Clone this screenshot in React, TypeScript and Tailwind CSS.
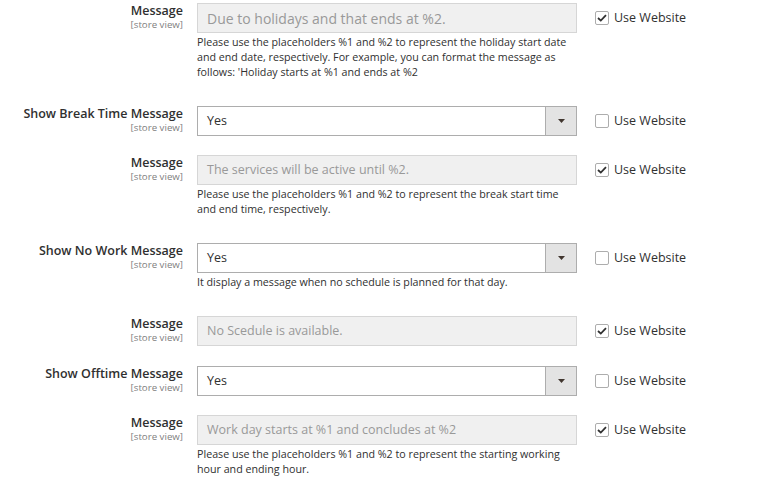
import React from 'react'

type Row = {
  label: string
  kind: 'text' | 'select'
  value: string
  checked: boolean
  big?: boolean
  note?: string[]
}

const rows: Row[] = [
  {
    label: 'Message',
    kind: 'text',
    value: 'Due to holidays and that ends at %2.',
    checked: true,
    big: true,
    note: [
      'Please use the placeholders %1 and %2 to represent the holiday start date',
      'and end date, respectively. For example, you can format the message as',
      "follows: 'Holiday starts at %1 and ends at %2",
    ],
  },
  { label: 'Show Break Time Message', kind: 'select', value: 'Yes', checked: false },
  {
    label: 'Message',
    kind: 'text',
    value: 'The services will be active until %2.',
    checked: true,
    note: [
      'Please use the placeholders %1 and %2 to represent the break start time',
      'and end time, respectively.',
    ],
  },
  {
    label: 'Show No Work Message',
    kind: 'select',
    value: 'Yes',
    checked: false,
    note: ['It display a message when no schedule is planned for that day.'],
  },
  { label: 'Message', kind: 'text', value: 'No Scedule is available.', checked: true },
  { label: 'Show Offtime Message', kind: 'select', value: 'Yes', checked: false },
  {
    label: 'Message',
    kind: 'text',
    value: 'Work day starts at %1 and concludes at %2',
    checked: true,
    note: [
      'Please use the placeholders %1 and %2 to represent the starting working',
      'hour and ending hour.',
    ],
  },
]

const Checkbox = ({ checked }: { checked: boolean }) => (
  <span className="flex h-[14px] w-[14px] items-center justify-center rounded-[2px] border border-[#adadad] bg-white">
    {checked && (
      <svg width="10" height="8" viewBox="0 0 10 8">
        <path d="M1 4 L3.8 6.6 L9 1.2" fill="none" stroke="#303030" strokeWidth="1.8" />
      </svg>
    )}
  </span>
)

const Field = ({ row }: { row: Row }) => {
  if (row.kind === 'select') {
    return (
      <div className="flex h-[30px] w-[380px] border border-[#adadad] bg-white">
        <div className="flex flex-1 items-center pl-[9px] text-[12.5px] text-[#303030]">{row.value}</div>
        <div className="flex w-[31px] items-center justify-center border-l border-[#adadad] bg-[#e3e3e3]">
          <svg width="7" height="4" viewBox="0 0 7 4">
            <path d="M0 0 L7 0 L3.5 4 Z" fill="#41362f" />
          </svg>
        </div>
      </div>
    )
  }
  return (
    <div
      className={`flex h-[30px] w-[380px] items-center border border-[#d6d6d6] bg-[#f0f0f0] pl-[9px] text-[#999999] ${
        row.big ? 'text-[14px]' : 'text-[12.5px]'
      }`}
    >
      {row.value}
    </div>
  )
}

export default function App() {
  return (
    <div
      className="min-h-screen bg-white pt-[3px] text-[#303030]"
      style={{ fontFamily: '"Open Sans", "Noto Sans", sans-serif' }}
    >
      {rows.map((row, i) => (
        <div key={i} className={`flex items-start ${i === 4 ? 'mb-[20px]' : 'mb-[19px]'}`}>
          <div className="w-[183px] shrink-0 text-right">
            <div className="text-[12.5px] font-semibold leading-[16px]">{row.label}</div>
            <div className="text-[9.7px] leading-[11px] text-[#808080]">[store view]</div>
          </div>
          <div className="ml-[14px] w-[380px] shrink-0">
            <Field row={row} />
            {row.note && (
              <div className="mb-[7px] mt-[2px] text-[10.7px] leading-[15px]">
                {row.note.map((line, j) => (
                  <div key={j} className="whitespace-nowrap">
                    {line}
                  </div>
                ))}
              </div>
            )}
          </div>
          <div className="ml-[18px] flex h-[30px] items-center gap-[5px]">
            <Checkbox checked={row.checked} />
            <span className="text-[12.5px] leading-[18px]">Use Website</span>
          </div>
        </div>
      ))}
    </div>
  )
}
